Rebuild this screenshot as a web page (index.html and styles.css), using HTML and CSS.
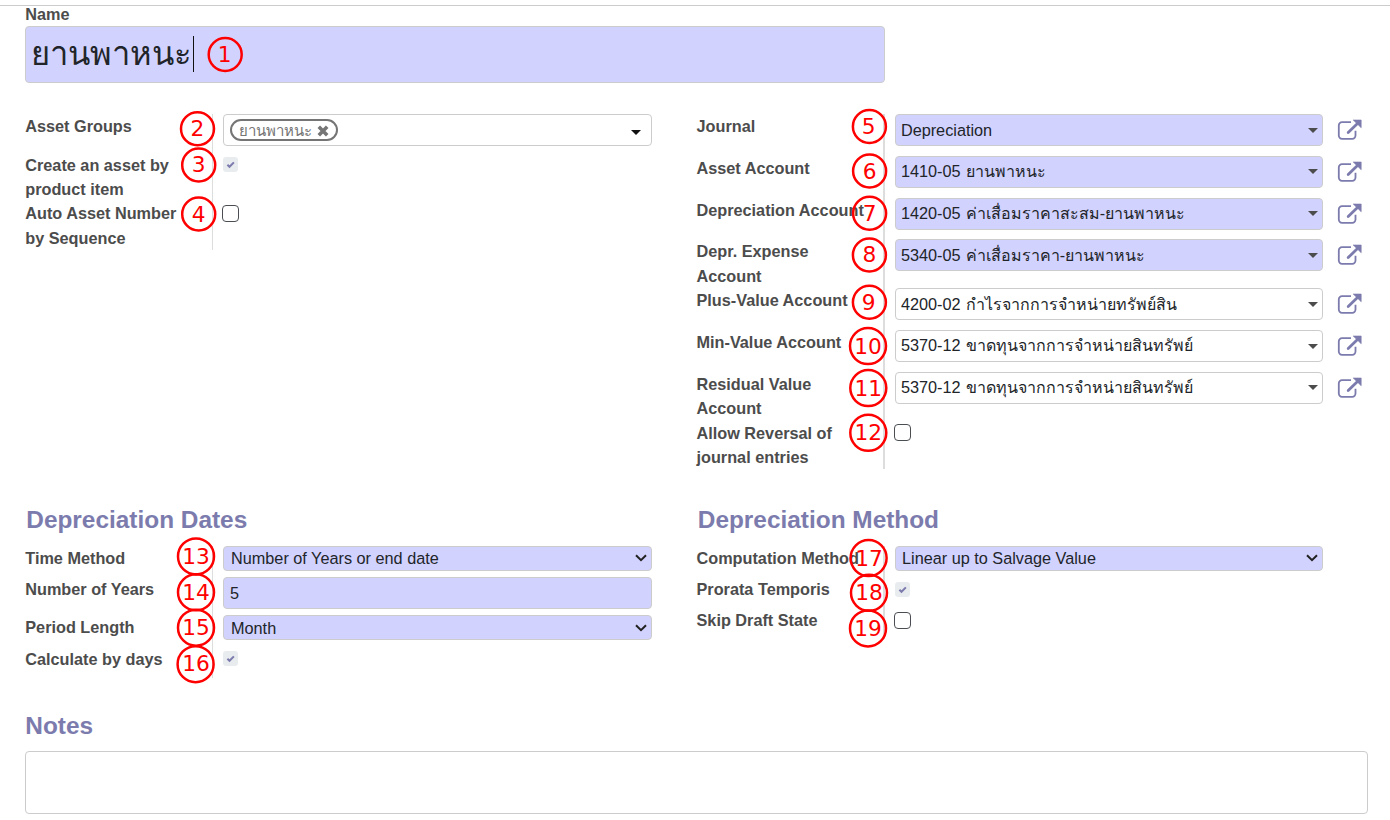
FILE: index.html
```html
<!DOCTYPE html>
<html lang="th">
<head>
<meta charset="utf-8">
<title>Asset Profile</title>
<link rel="stylesheet" href="styles.css">
</head>
<body>
<svg class="defs" aria-hidden="true">
  <symbol id="ext" viewBox="0 0 26 22">
    <path d="M14 3.2H5A3.2 3.2 0 0 0 1.8 6.4v10.2A3.2 3.2 0 0 0 5 19.8h10.3a3.2 3.2 0 0 0 3.2-3.2v-4.8" fill="none" stroke="currentColor" stroke-width="1.8"/>
    <path d="M11.2 13.6 20 5" fill="none" stroke="currentColor" stroke-width="2.8" stroke-linecap="round"/>
    <path d="M16.2 1h8v7.8Z" fill="currentColor" stroke="currentColor" stroke-width=".6" stroke-linejoin="round"/>
  </symbol>
  <symbol id="tick" viewBox="0 0 15 15">
    <path d="M4.4 7.8 6.5 9.8 10.9 5.4" fill="none" stroke="currentColor" stroke-width="2"/>
  </symbol>
  <symbol id="chev" viewBox="0 0 12 8">
    <path d="M1 1.2 6 6.2 11 1.2" fill="none" stroke="currentColor" stroke-width="2"/>
  </symbol>
</svg>
<main class="sheet">
  <section class="title">
    <label class="label">Name</label>
    <div class="name-input">ยานพาหนะ<span class="cursor"></span></div>
  </section>

  <div class="columns accounts">
    <div class="group">
      <div class="row tag-row"><span class="label">Asset Groups</span>
        <div class="cell"><div class="input tags"><span class="tag">ยานพาหนะ <svg class="remove" viewBox="0 0 12 12"><path d="M1.8 1.8 10.2 10.2M10.2 1.8 1.8 10.2" stroke="currentColor" stroke-width="3.6"/></svg></span><i class="caret dark"></i></div></div></div>
      <div class="row double"><span class="label">Create an asset by product item</span><div class="cell"><span class="check on"><svg><use href="#tick"/></svg></span></div></div>
      <div class="row double"><span class="label">Auto Asset Number by Sequence</span><div class="cell"><span class="check"></span></div></div>
    </div>
    <div class="group right">
      <div class="row many"><span class="label">Journal</span><div class="cell"><div class="input req">Depreciation<i class="caret"></i></div><svg class="ext"><use href="#ext"/></svg></div></div>
      <div class="row many"><span class="label">Asset Account</span><div class="cell"><div class="input req"><span>1410-05 <span class="th">ยานพาหนะ</span></span><i class="caret"></i></div><svg class="ext"><use href="#ext"/></svg></div></div>
      <div class="row many"><span class="label">Depreciation Account</span><div class="cell"><div class="input req"><span>1420-05 <span class="th">ค่าเสื่อมราคาสะสม-ยานพาหนะ</span></span><i class="caret"></i></div><svg class="ext"><use href="#ext"/></svg></div></div>
      <div class="row double"><span class="label">Depr. Expense Account</span><div class="cell"><div class="input req"><span>5340-05 <span class="th">ค่าเสื่อมราคา-ยานพาหนะ</span></span><i class="caret"></i></div><svg class="ext"><use href="#ext"/></svg></div></div>
      <div class="row many"><span class="label">Plus-Value Account</span><div class="cell"><div class="input"><span>4200-02 <span class="th">กำไรจากการจำหน่ายทรัพย์สิน</span></span><i class="caret"></i></div><svg class="ext"><use href="#ext"/></svg></div></div>
      <div class="row many"><span class="label">Min-Value Account</span><div class="cell"><div class="input"><span>5370-12 <span class="th">ขาดทุนจากการจำหน่ายสินทรัพย์</span></span><i class="caret"></i></div><svg class="ext"><use href="#ext"/></svg></div></div>
      <div class="row double"><span class="label">Residual Value Account</span><div class="cell"><div class="input"><span>5370-12 <span class="th">ขาดทุนจากการจำหน่ายสินทรัพย์</span></span><i class="caret"></i></div><svg class="ext"><use href="#ext"/></svg></div></div>
      <div class="row double"><span class="label">Allow Reversal of journal entries</span><div class="cell"><span class="check"></span></div></div>
    </div>
  </div>

  <div class="columns methods">
    <section>
      <h2>Depreciation Dates</h2>
      <div class="group">
        <div class="row single"><span class="label">Time Method</span><div class="cell"><div class="select">Number of Years or end date<svg class="chev"><use href="#chev"/></svg></div></div></div>
        <div class="row years"><span class="label">Number of Years</span><div class="cell"><div class="input req">5</div></div></div>
        <div class="row single"><span class="label">Period Length</span><div class="cell"><div class="select">Month<svg class="chev"><use href="#chev"/></svg></div></div></div>
        <div class="row single"><span class="label">Calculate by days</span><div class="cell"><span class="check on"><svg><use href="#tick"/></svg></span></div></div>
      </div>
    </section>
    <section>
      <h2>Depreciation Method</h2>
      <div class="group right">
        <div class="row single"><span class="label">Computation Method</span><div class="cell"><div class="select">Linear up to Salvage Value<svg class="chev"><use href="#chev"/></svg></div></div></div>
        <div class="row single"><span class="label">Prorata Temporis</span><div class="cell"><span class="check on"><svg><use href="#tick"/></svg></span></div></div>
        <div class="row single skip"><span class="label">Skip Draft State</span><div class="cell"><span class="check"></span></div></div>
      </div>
    </section>
  </div>

  <section class="notes">
    <h2>Notes</h2>
    <div class="notes-input"></div>
  </section>
</main>

<svg class="callouts" viewBox="0 0 1390 820">
  <g><circle cx="225.2" cy="54.5" r="16.5"/><text x="224.7" y="62.3">1</text></g>
  <g><circle cx="197.5" cy="128.8" r="16.5"/><text x="197.5" y="136.3">2</text></g>
  <g><circle cx="198.7" cy="165" r="16.5"/><text x="198.7" y="172.3">3</text></g>
  <g><circle cx="198.7" cy="214" r="16.5"/><text x="198.7" y="222">4</text></g>
  <g><circle cx="869.4" cy="126.5" r="16.5"/><text x="868.6" y="134">5</text></g>
  <g><circle cx="869.6" cy="171" r="16.5"/><text x="869.6" y="179">6</text></g>
  <g><circle cx="869.6" cy="213.2" r="16.5"/><text x="869.6" y="221.2">7</text></g>
  <g><circle cx="869.4" cy="255" r="16.5"/><text x="869.4" y="262.3">8</text></g>
  <g><circle cx="869.4" cy="302.3" r="16.5"/><text x="868.6" y="310">9</text></g>
  <g><circle cx="868" cy="346.1" r="18"/><text x="868" y="354">10</text></g>
  <g><circle cx="868.3" cy="388.1" r="18"/><text x="868.3" y="396">11</text></g>
  <g><circle cx="868.3" cy="432.8" r="18"/><text x="868.3" y="440.3">12</text></g>
  <g><circle cx="196" cy="556.4" r="18"/><text x="196" y="564">13</text></g>
  <g><circle cx="196" cy="592.3" r="18"/><text x="196" y="600.2">14</text></g>
  <g><circle cx="196" cy="627.7" r="18"/><text x="196" y="635.3">15</text></g>
  <g><circle cx="195.6" cy="664.2" r="18"/><text x="196" y="671.3">16</text></g>
  <g><circle cx="868.6" cy="558.1" r="18"/><text x="869" y="566">17</text></g>
  <g><circle cx="869" cy="592.8" r="18"/><text x="869" y="600.2">18</text></g>
  <g><circle cx="868" cy="628.4" r="18"/><text x="868" y="636.3">19</text></g>
</svg>
</body>
</html>
```
FILE: styles.css
```css
* { box-sizing: border-box; }
body {
  margin: 0;
  height: 820px;
  overflow: hidden;
  background: #fff;
  color: #212529;
  font: 16.25px/24.375px "Liberation Sans", Arial, sans-serif;
}
.defs { display: none; }
.sheet {
  margin-top: 5px;
  padding: 0 22px 0 25px;
  border-top: 1px solid #ccc;
}
.label { padding-left: .25px; color: #4c4c4c; font-weight: bold; }
.title { height: 108.1px; }
.title .label { display: block; height: 20px; line-height: 17px; }
.name-input {
  display: flex;
  align-items: center;
  width: 860px;
  height: 57px;
  padding: 0 5px 2px;
  border: 1px solid #ccc;
  border-radius: 4px;
  background: #d2d2ff;
  font-size: 32.7px;
  line-height: 48px;
}
.cursor { width: 1px; height: 36px; margin-left: 1px; background: #111; }

.columns { display: grid; grid-template-columns: 627px 1fr; column-gap: 44.5px; }
.accounts { height: 389.9px; align-items: start; }
.methods { height: 206px; align-items: start; }
.group { background: linear-gradient(#ddd, #ddd) 187px 0 / 1px 100% no-repeat; }
.group.right { background-position: 186.5px 0; background-size: 2px 100%; }
.row { display: grid; grid-template-columns: 168px 1fr; column-gap: 30px; }
.tag-row { height: 38.6px; }
.many { height: 41.75px; }
.double { height: 48.75px; }
.right .double { height: 48.95px; }
.right .double:last-child { height: 48.5px; }
.single { height: 31.25px; }
.skip { height: 31px; }
.years { height: 38.1px; }
.cell { display: flex; align-items: flex-start; gap: 14px; }
.right .label { margin-right: -10px; padding-left: 0; }
.input, .select {
  display: flex;
  align-items: center;
  justify-content: space-between;
  flex: none;
  width: 429px;
  height: 32px;
  padding: 0 4px 0 6px;
  border: 1px solid #ccc;
  border-radius: 4px;
  white-space: nowrap;
}
.right .input, .right .select { width: 428.5px; }
.right .input { padding-left: 5.4px; }
.right .select { padding-left: 6.5px; }
.th { margin-left: .7px; font-size: 16px; }
.req, .select { background: #d2d2ff; }
.select { height: 25px; padding: 0 4px 0 7px; }
.chev { width: 12px; height: 8px; color: #222; }
.caret { border: 5px solid transparent; border-top-color: #4c4c4c; border-bottom: 0; }
.caret.dark { border-top-color: #111; margin: 5px 6px 0 0; }
.tag {
  display: flex;
  align-items: center;
  gap: 5px;
  height: 22px;
  padding: 1px 7px 0;
  border: 2px solid #757575;
  border-radius: 11px;
  color: #757575;
  font-size: 15px;
  line-height: 18px;
}
.remove { width: 12px; height: 12px; }
.ext { width: 26px; height: 22px; margin-top: 5px; color: #7c7bad; }
.check {
  width: 17px;
  height: 17px;
  margin: 3.5px 0 0 -1px;
  border: 1.5px solid #4a4d52;
  border-radius: 4px;
}
.check.on { width: 15px; height: 15px; margin: 4.5px 0 0; border: 0; background: #e9ecef; color: #7c7bad; border-radius: 3px; }
.check svg { display: block; width: 15px; height: 15px; }
h2 { margin: 0; height: 42px; padding-left: 1.3px; color: #7c7bad; font-size: 24.4px; line-height: 32px; font-weight: bold; }
.notes h2 { height: 41px; padding-left: .3px; }
.notes-input { height: 63px; border: 1px solid #ccc; border-radius: 4px; }

.callouts { position: absolute; left: 0; top: 0; width: 1390px; height: 820px; pointer-events: none; }
.callouts circle { fill: none; stroke: #f00; stroke-width: 2.5px; }
.callouts text { fill: #f00; font: 21.7px "DejaVu Sans", sans-serif; text-anchor: middle; }
```
